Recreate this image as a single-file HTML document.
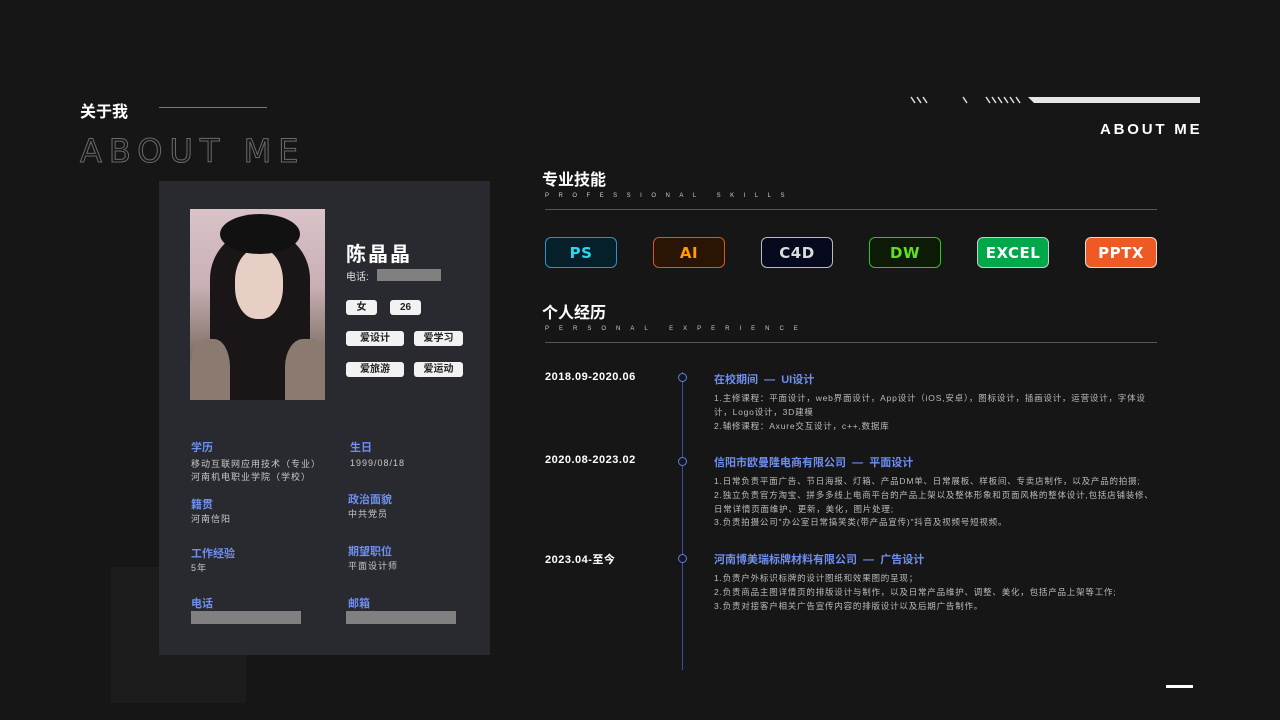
<!DOCTYPE html>
<html><head><meta charset="utf-8"><style>
*{margin:0;padding:0;box-sizing:border-box}
body{width:1280px;height:720px;background:#161616;position:relative;overflow:hidden;font-family:"Liberation Sans","Noto Sans CJK SC",sans-serif;color:#fff}
.a{position:absolute;white-space:nowrap}
.lab{color:#6f8ff0;font-size:11px;font-weight:bold}
.val{color:#c8c8c8;font-size:9px;letter-spacing:1px;line-height:13px}
.tag{position:absolute;background:#f2f2f2;color:#222;font-size:10px;font-weight:bold;border-radius:3px;text-align:center;height:15px;line-height:15px}
.sk{position:absolute;top:237px;width:72px;height:31px;border-radius:6px;border:1.5px solid;font-size:15px;font-weight:bold;text-align:center;line-height:31px;font-family:"DejaVu Sans",sans-serif;letter-spacing:.5px}
.date{position:absolute;left:545px;font-size:11px;font-weight:bold;letter-spacing:.5px}
.dot{position:absolute;left:678px;width:9px;height:9px;border:1.5px solid #5c7ef0;border-radius:50%;background:#161616}
.tt{position:absolute;left:714px;color:#6f8ff0;font-size:11px;font-weight:bold}
.ds{position:absolute;left:714px;width:445px;color:#bbb;font-size:8.5px;letter-spacing:.8px;line-height:13.8px}
</style></head><body>
<div class="a" style="left:80px;top:98px;font-size:16px;font-weight:bold">关于我</div>
<div class="a" style="left:159px;top:107px;width:108px;height:1px;background:#777"></div>
<div class="a" style="left:80px;top:132px;font-size:32px;letter-spacing:7px;color:transparent;-webkit-text-stroke:1px #6a6a6a;font-family:'DejaVu Sans',sans-serif">ABOUT ME</div>

<div class="a" style="left:111px;top:567px;width:135px;height:136px;background:#1c1c1c"></div>
<div class="a" style="left:159px;top:181px;width:331px;height:474px;background:#292a2f"></div>
<div class="a" style="left:190px;top:209px;width:135px;height:191px;background:linear-gradient(180deg,#d9c3c8 0%,#c9b0b5 40%,#8c7c74 70%,#4b403c 100%);overflow:hidden">
 <div class="a" style="left:20px;top:20px;width:100px;height:190px;border-radius:50px 50px 20px 20px;background:#1a1617"></div>
 <div class="a" style="left:45px;top:40px;width:48px;height:70px;border-radius:45%;background:#e8cfc6"></div>
 <div class="a" style="left:30px;top:5px;width:80px;height:40px;border-radius:50%;background:#111"></div>
 <div class="a" style="left:0;top:130px;width:40px;height:70px;background:#8a7a70;border-radius:40% 40% 0 0"></div>
 <div class="a" style="left:95px;top:130px;width:45px;height:70px;background:#8a7a70;border-radius:40% 40% 0 0"></div>
</div>
<div class="a" style="left:346px;top:238px;font-size:20px;font-weight:bold;letter-spacing:2px">陈晶晶</div>
<div class="a" style="left:346px;top:268px;font-size:10px;color:#ddd">电话:</div>
<div class="a" style="left:377px;top:269px;width:64px;height:12px;background:#808080"></div>
<div class="tag" style="left:346px;top:300px;width:31px">女</div>
<div class="tag" style="left:390px;top:300px;width:31px">26</div>
<div class="tag" style="left:346px;top:331px;width:58px">爱设计</div>
<div class="tag" style="left:414px;top:331px;width:49px">爱学习</div>
<div class="tag" style="left:346px;top:362px;width:58px">爱旅游</div>
<div class="tag" style="left:414px;top:362px;width:49px">爱运动</div>

<div class="a lab" style="left:191px;top:439px">学历</div>
<div class="a val" style="left:191px;top:458px">移动互联网应用技术（专业）<br>河南机电职业学院（学校）</div>
<div class="a lab" style="left:350px;top:439px">生日</div>
<div class="a val" style="left:350px;top:457px">1999/08/18</div>
<div class="a lab" style="left:191px;top:496px">籍贯</div>
<div class="a val" style="left:191px;top:513px">河南信阳</div>
<div class="a lab" style="left:348px;top:491px">政治面貌</div>
<div class="a val" style="left:348px;top:508px">中共党员</div>
<div class="a lab" style="left:191px;top:545px">工作经验</div>
<div class="a val" style="left:191px;top:562px">5年</div>
<div class="a lab" style="left:348px;top:543px">期望职位</div>
<div class="a val" style="left:348px;top:560px">平面设计师</div>
<div class="a lab" style="left:191px;top:595px">电话</div>
<div class="a" style="left:191px;top:611px;width:110px;height:13px;background:#808080"></div>
<div class="a lab" style="left:348px;top:595px">邮箱</div>
<div class="a" style="left:346px;top:611px;width:110px;height:13px;background:#808080"></div>

<svg class="a" style="left:905px;top:94px" width="300" height="12">
<g stroke="#ddd" stroke-width="1.5">
<line x1="6" y1="3" x2="10" y2="9"/><line x1="12" y1="3" x2="16" y2="9"/><line x1="18" y1="3" x2="22" y2="9"/>
<line x1="58" y1="3" x2="62" y2="9"/>
<line x1="81" y1="3" x2="85" y2="9"/><line x1="87" y1="3" x2="91" y2="9"/><line x1="93" y1="3" x2="97" y2="9"/><line x1="99" y1="3" x2="103" y2="9"/><line x1="105" y1="3" x2="109" y2="9"/><line x1="111" y1="3" x2="115" y2="9"/>
</g>
<polygon points="123,3 295,3 295,9 129,9" fill="#e6e6e6"/>
</svg>
<div class="a" style="left:1100px;top:121px;font-size:15px;font-weight:bold;letter-spacing:2.8px">ABOUT ME</div>

<div class="a" style="left:542px;top:166px;font-size:16px;font-weight:bold">专业技能</div>
<div class="a" style="left:545px;top:193px;font-size:6px;letter-spacing:9.5px;color:#ccc">PROFESSIONAL SKILLS</div>
<div class="a" style="left:545px;top:209px;width:612px;height:1px;background:#555"></div>
<div class="sk" style="left:545px;border-color:#2b8fd0;background:#06202a;color:#27d8f5">PS</div>
<div class="sk" style="left:653px;border-color:#d6581e;background:#2a1505;color:#ff9d00">AI</div>
<div class="sk" style="left:761px;border-color:#bbb;background:#070a1e;color:#ddd">C4D</div>
<div class="sk" style="left:869px;border-color:#2ac81d;background:#0c1a06;color:#5ee31a">DW</div>
<div class="sk" style="left:977px;border-color:#ccc;background:#00a84a;color:#fff">EXCEL</div>
<div class="sk" style="left:1085px;border-color:#ddd;background:#ee5a24;color:#fff">PPTX</div>

<div class="a" style="left:542px;top:299px;font-size:16px;font-weight:bold">个人经历</div>
<div class="a" style="left:545px;top:326px;font-size:6px;letter-spacing:10px;color:#ccc">PERSONAL EXPERIENCE</div>
<div class="a" style="left:545px;top:342px;width:612px;height:1px;background:#555"></div>

<div class="a" style="left:682px;top:372px;width:1px;height:298px;background:#3d4f9a"></div>
<div class="date" style="top:371px">2018.09-2020.06</div>
<div class="dot" style="top:373px"></div>
<div class="tt" style="top:371px">在校期间 &nbsp;— &nbsp;UI设计</div>
<div class="ds" style="top:392px">1.主修课程：平面设计，web界面设计，App设计（iOS,安卓），图标设计，插画设计，运营设计，字体设计，Logo设计，3D建模<br>2.辅修课程：Axure交互设计，c++,数据库</div>
<div class="date" style="top:454px">2020.08-2023.02</div>
<div class="dot" style="top:457px"></div>
<div class="tt" style="top:454px">信阳市欧曼隆电商有限公司 &nbsp;— &nbsp;平面设计</div>
<div class="ds" style="top:475px">1.日常负责平面广告、节日海报、灯箱、产品DM单、日常展板、样板间、专卖店制作，以及产品的拍摄;<br>2.独立负责官方淘宝、拼多多线上电商平台的产品上架以及整体形象和页面风格的整体设计,包括店铺装修、日常详情页面维护、更新，美化，图片处理;<br>3.负责拍摄公司"办公室日常搞笑类(带产品宣传)"抖音及视频号短视频。</div>
<div class="date" style="top:551px">2023.04-至今</div>
<div class="dot" style="top:554px"></div>
<div class="tt" style="top:551px">河南博美瑞标牌材料有限公司 &nbsp;— &nbsp;广告设计</div>
<div class="ds" style="top:572px">1.负责户外标识标牌的设计图纸和效果图的呈现；<br>2.负责商品主图详情页的排版设计与制作，以及日常产品维护、调整、美化，包括产品上架等工作;<br>3.负责对接客户相关广告宣传内容的排版设计以及后期广告制作。</div>

<div class="a" style="left:1166px;top:685px;width:27px;height:3px;background:#fff"></div>
</body></html>
